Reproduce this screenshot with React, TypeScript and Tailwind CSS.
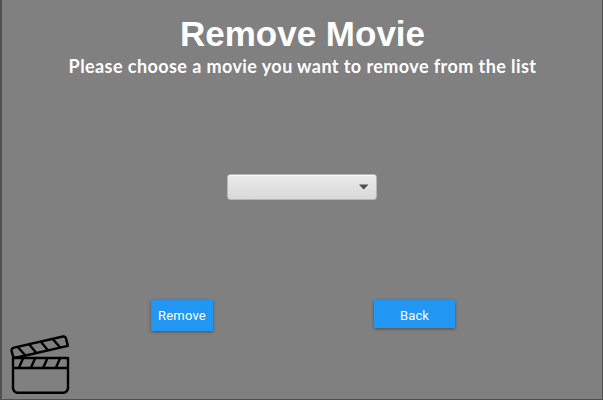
function ClapperIcon() {
  return (
    <svg width="62" height="62" viewBox="0 0 62 62" fill="none" stroke="#000" strokeWidth="2.4" strokeLinejoin="round">
      <path d="M4 24V54.5Q5 58.4 8.5 58.8H54.5Q58 58.4 59 54.5V24Z" />
      <path d="M4 34H59" />
      <path d="M14 24.5L10 33.5M26 24.5L22 33.5M38.3 24.5L34.3 33.5M51 24.5L47 33.5" />
      <path d="M4.3 23.3L2.5 16.5Q2.3 14.5 5 13.6L54 2.5Q56.3 2.2 57 4.5L58.8 11.8L10 23Z" />
      <path d="M8.7 13L16 21M20 10.3L27 18.5M31.7 7.6L38.7 16M43.7 5L51 13.2" />
    </svg>
  );
}

export default function App() {
  return (
    <main className="flex h-[400px] w-[603px] flex-col overflow-hidden border-r border-b border-l-2 border-[#505050] bg-[#808080]">
      <header className="flex flex-col items-center text-white">
        <h1 className="mt-[14px] h-10 whitespace-nowrap pl-px font-['Liberation_Sans',sans-serif] text-[35px] leading-[40px] font-bold">
          Remove Movie
        </h1>
        <p className="h-6 whitespace-nowrap pl-px font-[Lato,sans-serif] text-[18px] leading-[24px] font-bold tracking-[0.42px]">
          Please choose a movie you want to remove from the list
        </p>
      </header>

      <button
        aria-label="Movie"
        className="mt-[96px] ml-[225px] flex h-[26px] w-[150px] shrink-0 items-center justify-end rounded-[3px] border border-[#b5b5b5] bg-linear-to-b from-[#ececec] to-[#d8d8d8] pr-[7px] shadow-[inset_0_1px_0_#f9f9f9]"
      >
        <svg width="10" height="6" viewBox="0 0 10 6" fill="#4d4d4d">
          <path d="M0 .5H9.5L4.7 5.5Z" />
        </svg>
      </button>

      <div className="mt-[100px] ml-[149px] flex h-8 shrink-0 items-start gap-[161px] font-[Roboto,sans-serif] text-[13px] text-white">
        <button className="h-[31px] w-[62px] bg-[#2196f3] tracking-[0.2px] shadow-[0_1px_3px_rgba(0,0,0,0.4)]">Remove</button>
        <button className="h-7 w-[81px] bg-[#2196f3] pt-[3px] tracking-[0.1px] shadow-[0_1px_3px_rgba(0,0,0,0.4)]">Back</button>
      </div>

      <div className="mt-[2px] ml-[7px]">
        <ClapperIcon />
      </div>
    </main>
  );
}
